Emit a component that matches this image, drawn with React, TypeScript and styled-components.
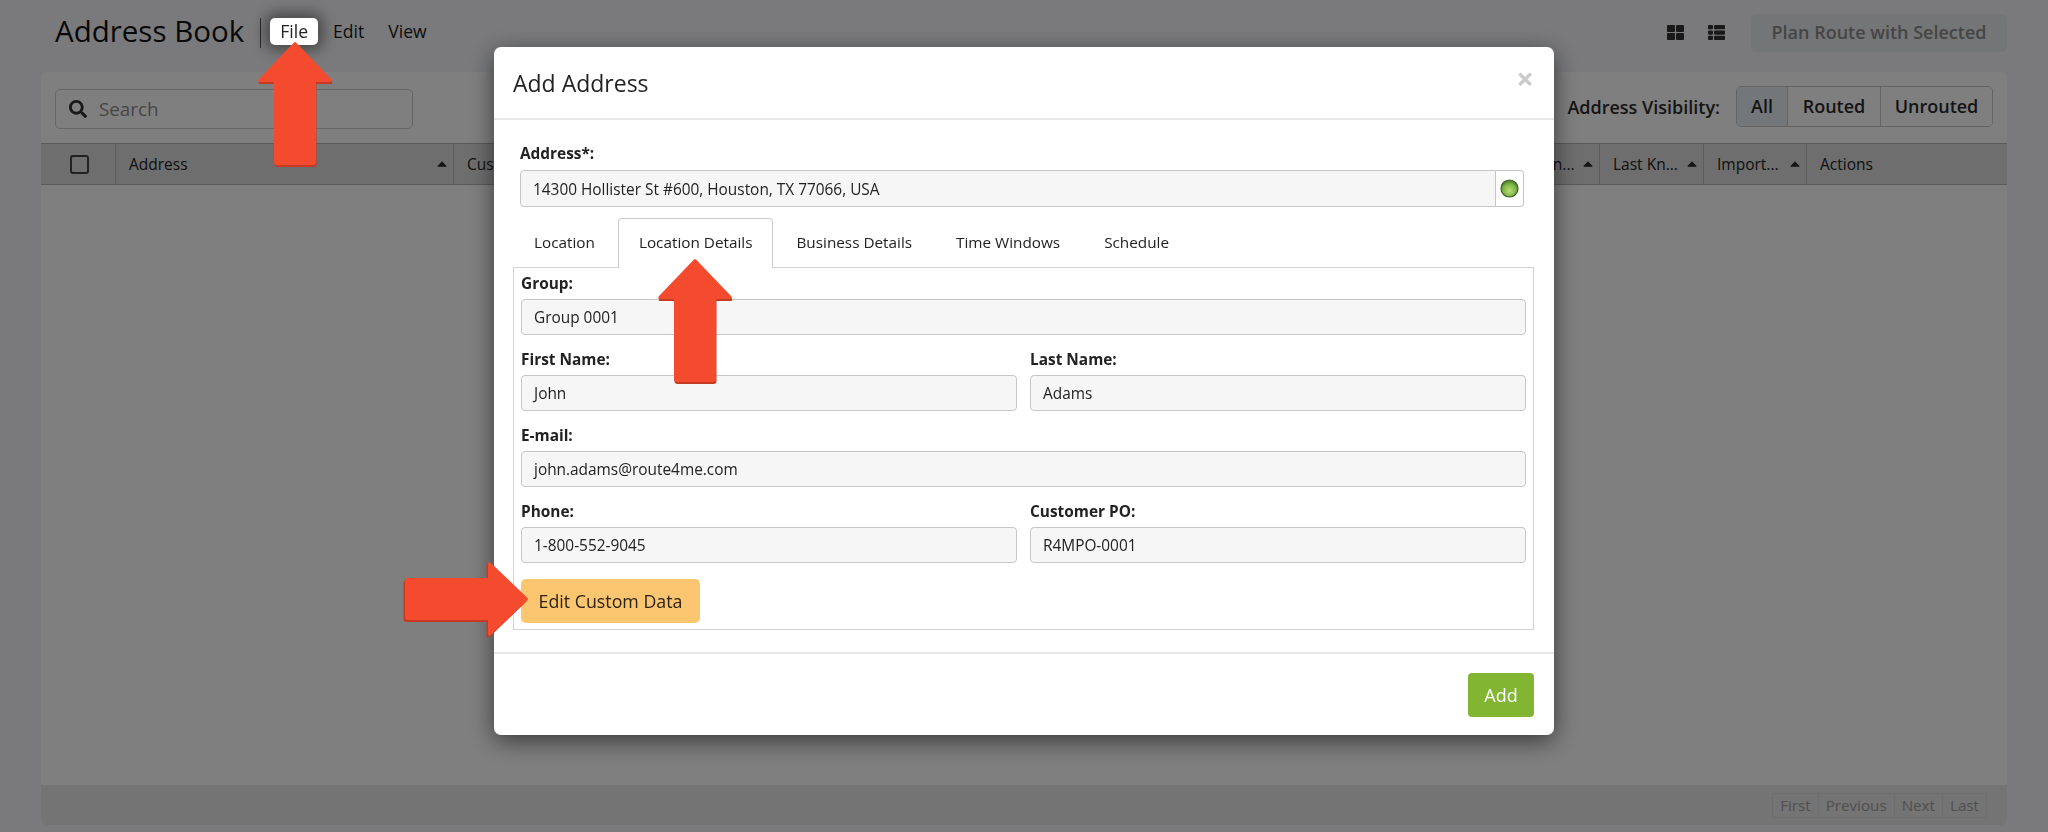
import React from "react";
import styled, { createGlobalStyle } from "styled-components";
import { FaSearch, FaThLarge, FaThList } from "react-icons/fa";

const GlobalStyle = createGlobalStyle`
  html, body {
    margin: 0;
    padding: 0;
    height: 100%;
    overflow: hidden;
    background: #f4f5f8;
    font-family: "Open Sans", "Liberation Sans", sans-serif;
    color: #222;
  }
  * {
    box-sizing: border-box;
  }
`;

const Page = styled.div`
  width: 2048px;
  height: 832px;
  display: flex;
  flex-direction: column;
  overflow: hidden;
`;

const TopBar = styled.div`
  height: 72px;
  flex: none;
  display: flex;
  align-items: flex-start;
  padding: 14px 41px 0 55px;
`;

const Title = styled.h1`
  margin: 0;
  height: 34px;
  padding-right: 17px;
  font-size: 29.5px;
  line-height: 34px;
  font-weight: 400;
  color: #111;
  position: relative;
  &::after {
    content: "";
    position: absolute;
    right: 0;
    top: 4px;
    bottom: 0;
    width: 1px;
    background: #555;
  }
`;

const Menu = styled.div`
  display: flex;
  align-items: center;
  height: 27px;
  margin: 4px 0 0 9px;
  gap: 15px;
`;

const MenuItem = styled.div<{ $active?: boolean; $wide?: boolean }>`
  height: 27px;
  padding: 0 ${(p) => (p.$active ? "10px" : "0")};
  margin-left: ${(p) => (p.$wide ? "9px" : "0")};
  font-size: 17.6px;
  line-height: 27px;
  border-radius: 5px;
  color: #1b1b1b;
  background: ${(p) => (p.$active ? "#fff" : "transparent")};
  ${(p) =>
    p.$active &&
    `
    position: relative;
    z-index: 20;
    color: #222;
    box-shadow: 0 0 14px 5px rgba(0, 0, 0, 0.42);
  `}
`;

const TopActions = styled.div`
  margin-left: auto;
  display: flex;
  align-items: center;
  color: #333;
`;

const ViewIcon = styled.span`
  display: flex;
  font-size: 17px;
  margin: 0 24px 2px 0;
`;

const PlanButton = styled.div`
  width: 256px;
  height: 38px;
  margin-left: 2px;
  border-radius: 5px;
  background: #e9eaec;
  color: #8a8a8a;
  font-size: 18px;
  font-weight: 600;
  line-height: 36px;
  text-align: center;
`;

const Panel = styled.div`
  flex: 1;
  margin: 0 41px 7px 41px;
  background: #fff;
  border-radius: 6px;
  display: flex;
  flex-direction: column;
  overflow: hidden;
`;

const Toolbar = styled.div`
  height: 71px;
  flex: none;
  display: flex;
  align-items: flex-start;
  justify-content: space-between;
  padding: 14px 14px 0 14px;
`;

const SearchBox = styled.div`
  width: 358px;
  height: 40px;
  margin-top: 3px;
  border: 1px solid #ccc;
  border-radius: 5px;
  background: #fff;
  display: flex;
  align-items: center;
  gap: 12px;
  padding-left: 13px;
  color: #333;
  font-size: 18.8px;
  svg {
    font-size: 18px;
  }
  span {
    color: #8c8c8c;
  }
`;

const Visibility = styled.div`
  display: flex;
  align-items: center;
  gap: 16px;
`;

const VisibilityLabel = styled.div`
  font-size: 18px;
  font-weight: 600;
  color: #2a2a2a;
`;

const ButtonGroup = styled.div`
  display: flex;
  height: 41px;
  border: 1px solid #c8c8c8;
  border-radius: 5px;
  overflow: hidden;
`;

const GroupButton = styled.div<{ $active?: boolean; $w: number }>`
  width: ${(p) => p.$w}px;
  font-size: 18px;
  font-weight: 600;
  line-height: 39px;
  text-align: center;
  color: #2a2a2a;
  background: ${(p) => (p.$active ? "#e8eff5" : "#fff")};
  & + & {
    border-left: 1px solid #c8c8c8;
  }
`;

const TableHead = styled.div`
  height: 42px;
  flex: none;
  display: flex;
  background: #dcdcdc;
  border-top: 1px solid #b5b5b5;
  border-bottom: 1px solid #b5b5b5;
  font-size: 15.5px;
  color: #222;
`;

const HeadCell = styled.div<{ $w?: number }>`
  width: ${(p) => (p.$w ? `${p.$w}px` : "auto")};
  flex: ${(p) => (p.$w ? "none" : "1")};
  display: flex;
  align-items: center;
  justify-content: space-between;
  padding: 0 6px 0 13px;
  white-space: nowrap;
  & + & {
    border-left: 1px solid #bbb;
  }
`;

const CheckBox = styled.span`
  width: 19px;
  height: 19px;
  margin-left: 16px;
  border: 2px solid #444;
  border-radius: 3px;
  background: transparent;
`;

const TableBody = styled.div`
  flex: 1;
`;

const TableFooter = styled.div`
  height: 40px;
  flex: none;
  background: #e8e8e8;
  display: flex;
  justify-content: flex-end;
  align-items: center;
  padding-right: 20px;
`;

const Pager = styled.div`
  display: flex;
  height: 25px;
  border: 1px solid #ddd;
`;

const PagerItem = styled.div`
  padding: 0 7px;
  font-size: 15.2px;
  line-height: 23px;
  color: #a0a0a0;
  & + & {
    border-left: 1px solid #ddd;
  }
`;

const Backdrop = styled.div`
  position: fixed;
  inset: 0;
  background: rgba(0, 0, 0, 0.5);
  z-index: 10;
`;

const Modal = styled.div`
  position: fixed;
  left: 494px;
  top: 47px;
  width: 1060px;
  height: 688px;
  z-index: 15;
  background: #fff;
  border-radius: 7px;
  box-shadow: 0 6px 24px rgba(0, 0, 0, 0.55);
  display: flex;
  flex-direction: column;
`;

const ModalHeader = styled.div`
  height: 73px;
  flex: none;
  border-bottom: 2px solid #e8e8e8;
  display: flex;
  justify-content: space-between;
  padding: 20px 20px 0 19px;
`;

const ModalTitle = styled.h4`
  margin: 0;
  font-size: 23px;
  line-height: 32px;
  font-weight: 400;
  color: #222;
`;

const Close = styled.span`
  font-size: 31px;
  line-height: 22px;
  font-weight: 700;
  color: #c9c9c9;
`;

const ModalBody = styled.div`
  flex: 1;
  padding: 24px 20px 0 19px;
`;

const AddressField = styled.div`
  padding: 0 10px 0 7px;
`;

const FieldLabel = styled.label`
  display: block;
  height: 25px;
  font-size: 15.4px;
  line-height: 20px;
  font-weight: 700;
  color: #222;
`;

const TextBox = styled.div`
  height: 37px;
  border: 1px solid #c6c6c6;
  border-radius: 4px;
  background: #f6f6f6;
  padding: 0 12px;
  font-size: 15.4px;
  line-height: 37px;
  color: #222;
  flex: 1;
`;

const InputGroup = styled.div`
  display: flex;
  margin-top: 1px;
`;

const AddressInput = styled(TextBox)`
  border-radius: 4px 0 0 4px;
`;

const Addon = styled.div`
  width: 28px;
  height: 37px;
  border: 1px solid #c6c6c6;
  border-left: none;
  border-radius: 0 4px 4px 0;
  display: flex;
  align-items: center;
  justify-content: center;
`;

const Tabs = styled.div`
  display: flex;
  height: 50px;
  margin-top: 11px;
  position: relative;
  z-index: 1;
`;

const Tab = styled.div<{ $active?: boolean }>`
  height: ${(p) => (p.$active ? "50px" : "49px")};
  margin-right: 2px;
  padding: 0 20px;
  font-size: 15.3px;
  line-height: 47px;
  color: #222;
  background: #fff;
  border-radius: 4px 4px 0 0;
  border: 1px solid ${(p) => (p.$active ? "#ccc" : "transparent")};
  border-bottom: ${(p) => (p.$active ? "none" : "1px solid transparent")};
  white-space: nowrap;
`;

const TabPane = styled.div`
  height: 363px;
  margin-top: -1px;
  border: 1px solid #d2d2d2;
  padding: 6px 7px 0 7px;
`;

const FormRow = styled.div`
  display: flex;
  gap: 13px;
  margin-bottom: 15px;
`;

const FormCol = styled.div`
  flex: 1;
  min-width: 0;
`;

const PaneBox = styled(TextBox)`
  height: 36px;
  line-height: 35px;
`;

const CustomDataButton = styled.div`
  width: 179px;
  height: 44px;
  margin-top: 16px;
  border-radius: 5px;
  background: #fcc56f;
  color: #2a2317;
  font-size: 17.8px;
  line-height: 44px;
  text-align: center;
`;

const ModalFooter = styled.div`
  height: 83px;
  flex: none;
  border-top: 2px solid #e8e8e8;
  display: flex;
  justify-content: flex-end;
  padding: 19px 20px 0 0;
`;

const AddButton = styled.div`
  width: 66px;
  height: 44px;
  border-radius: 4px;
  background: #82b531;
  color: #fff;
  font-size: 18px;
  line-height: 44px;
  text-align: center;
`;

const ArrowWrap = styled.svg<{ $x: number; $y: number }>`
  position: fixed;
  left: ${(p) => p.$x}px;
  top: ${(p) => p.$y}px;
  z-index: 30;
  overflow: visible;
`;

// the red call-out arrows, drawn pointing up and turned when needed
const Arrow: React.FC<{ x: number; y: number; right?: boolean }> = ({ x, y, right }) => {
  const d =
    "M36 1.500 Q37 0.500 38 1.500 L73 38 Q75 41 72 41 L58 41 L58 121 Q58 124 55 124 L19 124 Q16 124 16 121 L16 41 L2 41 Q-1 41 1 38 Z";
  return (
    <ArrowWrap
      $x={x}
      $y={y}
      width={right ? 125 : 74}
      height={right ? 74 : 125}
      viewBox={right ? "0 0 125 74" : "0 0 74 125"}
    >
      <g transform={right ? "translate(125 0) rotate(90)" : undefined}>
        <path d={d} fill="#c43a24" transform={right ? "translate(2 1.500)" : "translate(0.500 2)"} />
        <path d={d} fill="#f44a2e" />
      </g>
    </ArrowWrap>
  );
};

const SortCaret: React.FC = () => (
  <svg width="10" height="6" viewBox="0 0 10 6">
    <path d="M5 0.800 L9.200 5.200 L0.800 5.200 Z" fill="#2b2b2b" stroke="#2b2b2b" strokeLinejoin="round" />
  </svg>
);

const Led: React.FC = () => (
  <svg width="19" height="19" viewBox="0 0 19 19">
    <defs>
      <radialGradient id="led" cx="50%" cy="62%" r="55%">
        <stop offset="0%" stopColor="#b7e07a" />
        <stop offset="70%" stopColor="#7cb342" />
        <stop offset="100%" stopColor="#55852a" />
      </radialGradient>
    </defs>
    <circle cx="9.500" cy="9.500" r="8.500" fill="url(#led)" stroke="#3c5f2a" strokeWidth="1.200" />
  </svg>
);

const App: React.FC = () => {
  return (
    <>
      <GlobalStyle />
      <Page>
        <TopBar>
          <Title>Address Book</Title>
          <Menu>
            <MenuItem $active>File</MenuItem>
            <MenuItem>Edit</MenuItem>
            <MenuItem $wide>View</MenuItem>
          </Menu>
          <TopActions>
            <ViewIcon>
              <FaThLarge />
            </ViewIcon>
            <ViewIcon>
              <FaThList />
            </ViewIcon>
            <PlanButton>Plan Route with Selected</PlanButton>
          </TopActions>
        </TopBar>
        <Panel>
          <Toolbar>
            <SearchBox>
              <FaSearch />
              <span>Search</span>
            </SearchBox>
            <Visibility>
              <VisibilityLabel>Address Visibility:</VisibilityLabel>
              <ButtonGroup>
                <GroupButton $active $w={50}>
                  All
                </GroupButton>
                <GroupButton $w={93}>Routed</GroupButton>
                <GroupButton $w={112}>Unrouted</GroupButton>
              </ButtonGroup>
            </Visibility>
          </Toolbar>
          <TableHead>
            <HeadCell $w={74}>
              <CheckBox />
            </HeadCell>
            <HeadCell $w={338}>
              Address
              <SortCaret />
            </HeadCell>
            <HeadCell $w={1000}>
              Cus
              <SortCaret />
            </HeadCell>
            <HeadCell $w={146}>
              Last Location...
              <SortCaret />
            </HeadCell>
            <HeadCell $w={104}>
              Last Kn...
              <SortCaret />
            </HeadCell>
            <HeadCell $w={103}>
              Import...
              <SortCaret />
            </HeadCell>
            <HeadCell>Actions</HeadCell>
          </TableHead>
          <TableBody />
          <TableFooter>
            <Pager>
              <PagerItem>First</PagerItem>
              <PagerItem>Previous</PagerItem>
              <PagerItem>Next</PagerItem>
              <PagerItem>Last</PagerItem>
            </Pager>
          </TableFooter>
        </Panel>
      </Page>
      <Backdrop />
      <Modal>
        <ModalHeader>
          <ModalTitle>Add Address</ModalTitle>
          <Close>×</Close>
        </ModalHeader>
        <ModalBody>
          <AddressField>
            <FieldLabel>Address*:</FieldLabel>
            <InputGroup>
              <AddressInput>14300 Hollister St #600, Houston, TX 77066, USA</AddressInput>
              <Addon>
                <Led />
              </Addon>
            </InputGroup>
          </AddressField>
          <Tabs>
            <Tab>Location</Tab>
            <Tab $active>Location Details</Tab>
            <Tab>Business Details</Tab>
            <Tab>Time Windows</Tab>
            <Tab>Schedule</Tab>
          </Tabs>
          <TabPane>
            <FormRow>
              <FormCol>
                <FieldLabel>Group:</FieldLabel>
                <PaneBox>Group 0001</PaneBox>
              </FormCol>
            </FormRow>
            <FormRow>
              <FormCol>
                <FieldLabel>First Name:</FieldLabel>
                <PaneBox>John</PaneBox>
              </FormCol>
              <FormCol>
                <FieldLabel>Last Name:</FieldLabel>
                <PaneBox>Adams</PaneBox>
              </FormCol>
            </FormRow>
            <FormRow>
              <FormCol>
                <FieldLabel>E-mail:</FieldLabel>
                <PaneBox>john.adams@route4me.com</PaneBox>
              </FormCol>
            </FormRow>
            <FormRow>
              <FormCol>
                <FieldLabel>Phone:</FieldLabel>
                <PaneBox>1-800-552-9045</PaneBox>
              </FormCol>
              <FormCol>
                <FieldLabel>Customer PO:</FieldLabel>
                <PaneBox>R4MPO-0001</PaneBox>
              </FormCol>
            </FormRow>
            <CustomDataButton>Edit Custom Data</CustomDataButton>
          </TabPane>
        </ModalBody>
        <ModalFooter>
          <AddButton>Add</AddButton>
        </ModalFooter>
      </Modal>
      <Arrow x={258} y={41} />
      <Arrow x={658} y={258} />
      <Arrow x={404} y={562} right />
    </>
  );
};

export default App;
